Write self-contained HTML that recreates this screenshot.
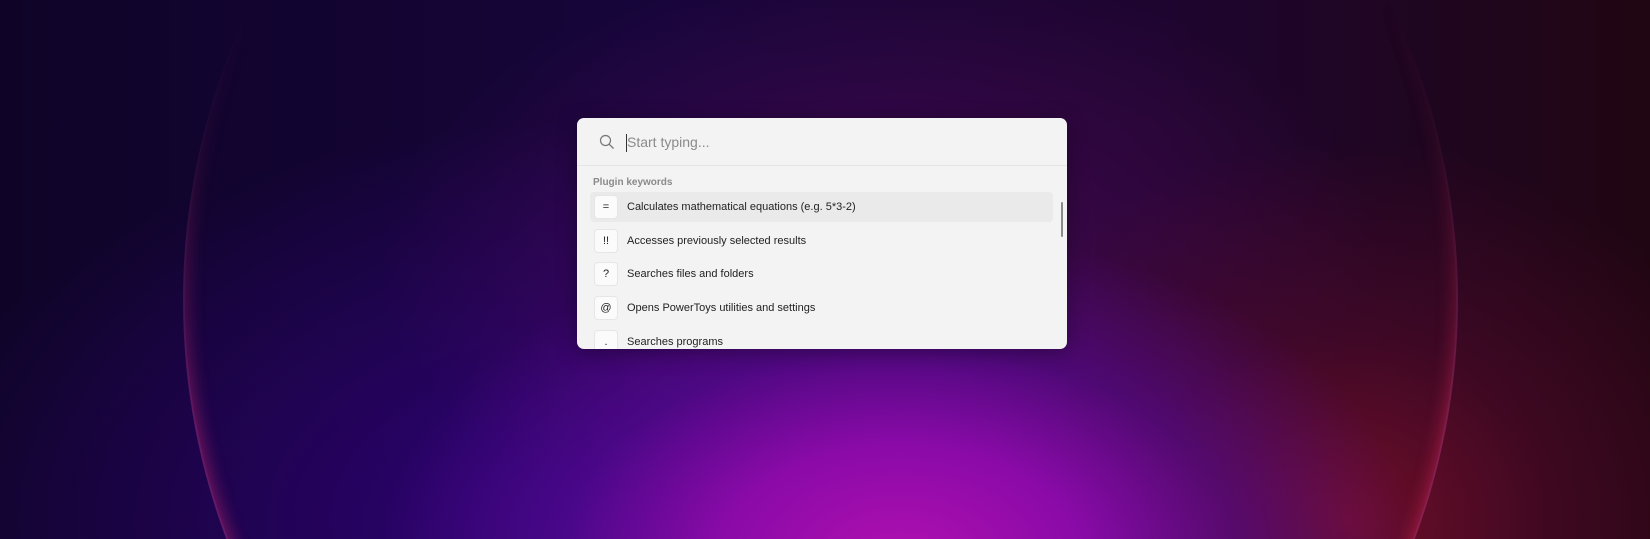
<!DOCTYPE html>
<html><head><meta charset="utf-8"><style>
*{margin:0;padding:0;box-sizing:border-box}
html,body{width:1650px;height:539px;overflow:hidden}
body{position:relative;font-family:"Segoe UI","Liberation Sans",sans-serif;
background:
radial-gradient(ellipse 520px 330px at 900px 560px,#b010b0 0%,#8a0aa8 35%,rgba(90,10,150,0.6) 65%,rgba(40,5,90,0) 100%),
radial-gradient(ellipse 420px 380px at 1350px 520px,rgba(120,15,40,0.9) 0%,rgba(90,10,40,0.5) 50%,rgba(40,5,30,0) 100%),
radial-gradient(ellipse 500px 300px at 880px 260px,rgba(110,10,110,0.5) 0%,rgba(60,5,80,0) 100%),
radial-gradient(ellipse 700px 400px at 600px 520px,rgba(60,0,150,0.7) 0%,rgba(30,0,80,0) 100%),
linear-gradient(90deg,#0f0428 0%,#16053a 40%,#1e0530 70%,#200612 100%);}
.clip{position:absolute;left:0;top:0;width:1650px;height:539px;overflow:hidden;
-webkit-mask-image:linear-gradient(180deg,transparent 0%,rgba(0,0,0,0.2) 25%,#000 80%);mask-image:linear-gradient(180deg,transparent 0%,rgba(0,0,0,0.2) 25%,#000 80%)}
.arc{position:absolute;left:183px;top:-360px;width:1275px;height:1320px;border-radius:50%;
border:2px solid rgba(200,60,140,0.4);box-shadow:inset 6px 0 14px rgba(230,50,120,0.3),inset -6px 0 14px rgba(230,50,100,0.3)}
.panel{position:absolute;left:577px;top:118px;width:490px;height:231px;background:#f3f3f3;border-radius:7px;overflow:hidden;box-shadow:0 4px 20px rgba(0,0,0,0.35)}
.search{height:48px;border-bottom:1px solid #e5e5e5;position:relative}
.search svg{position:absolute;left:22px;top:16px}
.caret{position:absolute;left:49px;top:16px;width:1px;height:18px;background:#333}
.ph{position:absolute;left:50px;top:16px;font-size:14px;color:#8a8a8a}
.lbl{position:absolute;left:16px;top:59px;font-size:10px;color:#8a8a8a;font-weight:600}
.row{position:absolute;left:13px;width:463px;height:30px;border-radius:4px}
.row.sel{background:#eaeaea}
.key{position:absolute;left:4px;top:3px;width:24px;height:24px;background:#fbfbfb;border:1px solid #e6e6e6;border-radius:4px;font-size:11px;color:#222;text-align:center;line-height:22px}
.txt{position:absolute;left:37px;top:9px;font-size:11px;color:#1f1f1f}
.sb{position:absolute;left:484px;top:84px;width:2px;height:35px;background:#8a8a8a;border-radius:1px}
</style></head><body>
<div class="clip"><div class="arc"></div></div>
<div class="panel">
 <div class="search">
  <svg width="16" height="16" viewBox="0 0 16 16"><circle cx="6.5" cy="6.5" r="5" fill="none" stroke="#777" stroke-width="1.2"/><line x1="10.2" y1="10.2" x2="14.5" y2="14.5" stroke="#777" stroke-width="1.3"/></svg>
  <div class="caret"></div><div class="ph">Start typing...</div>
 </div>
 <div class="lbl">Plugin keywords</div>
 <div class="row sel" style="top:74px"><div class="key">=</div><div class="txt">Calculates mathematical equations (e.g. 5*3-2)</div></div>
 <div class="row" style="top:108px"><div class="key">!!</div><div class="txt">Accesses previously selected results</div></div>
 <div class="row" style="top:141px"><div class="key">?</div><div class="txt">Searches files and folders</div></div>
 <div class="row" style="top:175px"><div class="key">@</div><div class="txt">Opens PowerToys utilities and settings</div></div>
 <div class="row" style="top:209px"><div class="key">.</div><div class="txt">Searches programs</div></div>
 <div class="sb"></div>
</div>
</body></html>
